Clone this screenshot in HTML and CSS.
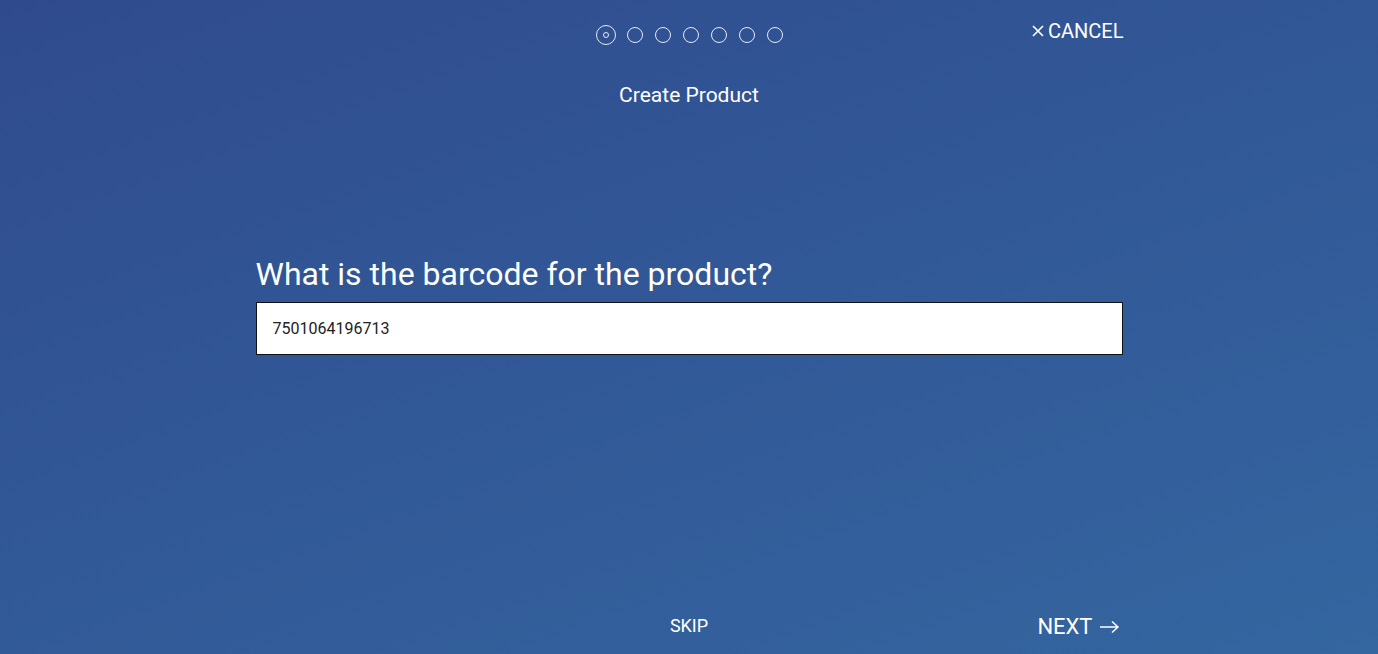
FILE: index.html
```html
<!DOCTYPE html>
<html>
<head>
<meta charset="utf-8">
<link rel="stylesheet" href="styles.css">
</head>
<body>
<div class="page">
  <header class="top">
    <div class="steps">
      <span class="step active"></span>
      <span class="step"></span>
      <span class="step"></span>
      <span class="step"></span>
      <span class="step"></span>
      <span class="step"></span>
      <span class="step"></span>
    </div>
    <a class="cancel"><svg width="14" height="14" viewBox="0 0 14 14"><path d="M2 2L12 12M12 2L2 12" stroke="#fff" stroke-width="1.7" fill="none"/></svg>CANCEL</a>
  </header>
  <div class="title">Create Product</div>
  <main class="question">
    <label class="q-label">What is the barcode for the product?</label>
    <div class="field">7501064196713</div>
  </main>
  <footer class="bottom">
    <a class="skip">SKIP</a>
    <a class="next">NEXT <svg width="22" height="14" viewBox="0 0 22 14"><path d="M1 7H19M13 1.5L19 7L13 12.5" stroke="#fff" stroke-width="1.5" fill="none"/></svg></a>
  </footer>
</div>
</body>
</html>
```

FILE: styles.css
```css
html, body {
  margin: 0;
  padding: 0;
  height: 100%;
}
body {
  background: linear-gradient(160deg, #2f4b8e 0%, #3466a0 100%);
  font-family: Roboto, "Liberation Sans", sans-serif;
  color: #fff;
  overflow: hidden;
}
.page {
  width: 867px;
  margin: 0 auto;
  height: 654px;
  display: flex;
  flex-direction: column;
}
.top {
  position: relative;
  height: 70px;
  display: flex;
  justify-content: center;
}
.steps {
  display: flex;
  align-items: center;
  gap: 12px;
  height: 70px;
}
.step {
  width: 16px;
  height: 16px;
  border: 1.4px solid #e8ecf5;
  border-radius: 50%;
  box-sizing: border-box;
  position: relative;
}
.step.active {
  width: 20px;
  height: 20px;
  border-width: 1.7px;
  margin-right: -1px;
}
.step.active::after {
  content: "";
  position: absolute;
  left: 50%;
  top: 50%;
  width: 6px;
  height: 6px;
  margin: -3px 0 0 -3px;
  border: 1.4px solid #e8ecf5;
  border-radius: 50%;
  box-sizing: border-box;
}
.cancel {
  position: absolute;
  right: -1px;
  top: 19px;
  font-size: 20px;
  font-weight: 400;
  display: flex;
  align-items: center;
  gap: 3px;
  color: #fff;
}
.cancel svg {
  margin-left: 1px;
}
.title {
  text-align: center;
  font-size: 21px;
  font-weight: 400;
  margin-top: 13px;
}
.question {
  flex: 1;
  padding-top: 148px;
}
.q-label {
  display: block;
  font-size: 32px;
  font-weight: 400;
  line-height: 38px;
  margin-bottom: 9px;
}
.field {
  background: #fff;
  border: 1px solid #111;
  height: 51px;
  box-sizing: content-box;
  display: flex;
  align-items: center;
  padding-left: 16px;
  font-size: 16px;
  color: #222;
}
.bottom {
  position: relative;
  height: 42px;
  display: flex;
  justify-content: center;
  align-items: flex-start;
}
.skip {
  font-size: 18px;
  font-weight: 400;
  margin-top: 3px;
  margin-left: 0;
}
.next {
  position: absolute;
  right: 2px;
  top: 2px;
  font-size: 22px;
  font-weight: 400;
  display: flex;
  align-items: center;
  gap: 6px;
}
```
